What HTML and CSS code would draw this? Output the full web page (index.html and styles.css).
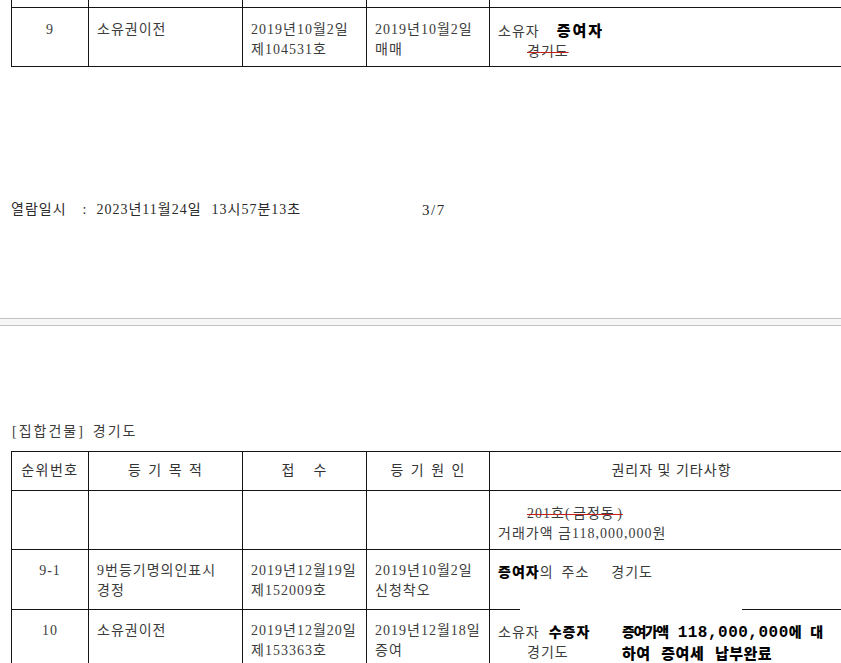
FILE: index.html
```html
<!DOCTYPE html>
<html lang="ko">
<head>
<meta charset="utf-8">
<title>등기사항</title>
<link rel="stylesheet" href="styles.css">
</head>
<body>
<div class="page">
  <div class="sheet">
    <div class="row stub">
      <div class="cell"></div><div class="cell"></div><div class="cell"></div><div class="cell"></div><div class="cell"></div>
    </div>
    <div class="row r9">
      <div class="cell num">9</div>
      <div class="cell">소유권이전</div>
      <div class="cell">2019년10월2일<br>제104531호</div>
      <div class="cell">2019년10월2일<br>매매</div>
      <div class="cell">소유자<span class="heavy big gap21">증여자</span><br><span class="strike ind">경기도</span></div>
    </div>
  </div>

  <div class="footer">
    <span class="foot-left"><span>열람일시</span><span class="colon">:</span><span class="fdate">2023년11월24일</span><span class="ftime">13시57분13초</span></span>
    <span class="pageno">3/7</span>
  </div>

  <div class="sep"></div>

  <div class="title"><span>[집합건물]</span><span class="tloc">경기도</span></div>

  <div class="sheet">
    <div class="row head">
      <div class="cell hc spaced">순위번호</div>
      <div class="cell hc wide">등 기 목 적</div>
      <div class="cell hc">접&nbsp;&nbsp;&nbsp;&nbsp;수</div>
      <div class="cell hc wide">등 기 원 인</div>
      <div class="cell hc">권리자 및 기타사항</div>
    </div>
    <div class="row ra">
      <div class="cell num"></div>
      <div class="cell"></div>
      <div class="cell"></div>
      <div class="cell"></div>
      <div class="cell"><span class="strike ind wide2">201호( 금정동 )</span><br>거래가액 금118,000,000원</div>
    </div>
    <div class="row r91">
      <div class="cell num">9-1</div>
      <div class="cell">9번등기명의인표시<br>경정</div>
      <div class="cell">2019년12월19일<br>제152009호</div>
      <div class="cell">2019년10월2일<br>신청착오</div>
      <div class="cell"><span class="heavy">증여자</span>의<span class="sp12">주소</span><span class="sp32">경기도</span></div>
    </div>
    <div class="row r10">
      <div class="cell num">10</div>
      <div class="cell">소유권이전</div>
      <div class="cell">2019년12월20일<br>제153363호</div>
      <div class="cell">2019년12월18일<br>증여</div>
      <div class="cell split">
        <div class="mask"></div>
        <div class="owner">소유자<span class="heavy gap8">수증자</span><br><span class="ind">경기도</span></div>
        <div class="note"><span class="kb kb1">증여가액</span><span class="mono"> 118,000,000</span><span class="kb kb1">에</span><span class="mono"> </span><span class="kb kb1">대</span><br><span class="kb">하여 증여세 납부완료</span></div>
      </div>
    </div>
  </div>
</div>
</body>
</html>
```

FILE: styles.css
```css
html, body {
  margin: 0;
  padding: 0;
  overflow: hidden;
  background: #ffffff;
}

.page {
  width: 841px;
  height: 663px;
  overflow: hidden;
  font-family: "Liberation Serif", "Noto Sans CJK KR", serif;
  font-size: 14px;
  line-height: 20px;
  letter-spacing: 1px;
  color: #3c3c3c;
}

.sheet {
  margin-left: 11px;
  width: 843px;
}

.row {
  display: grid;
  grid-template-columns: 78px 154px 124px 123px 364px;
}

.cell {
  box-sizing: border-box;
  border-right: 1px solid #141414;
  border-bottom: 1px solid #141414;
  padding: 0 8px;
  white-space: nowrap;
}

.cell:first-child {
  border-left: 1px solid #141414;
}

.stub .cell { height: 8px; }

.r9 .cell { height: 59px; padding-top: 12px; }

.num { text-align: center; }

.footer {
  margin-top: 133px;
  padding-left: 11px;
  display: grid;
  grid-template-columns: 411px auto;
  color: #2a2a2a;
}

.colon { margin-left: 16px; }
.fdate { margin-left: 9px; }
.ftime { margin-left: 10px; }
.pageno { letter-spacing: 1.5px; font-size: 15px; }

.sep {
  margin-top: 98px;
  box-sizing: border-box;
  height: 8px;
  border-top: 1px solid #c2c2c2;
  border-bottom: 1px solid #c2c2c2;
  background: #f6f6f6;
}

.title {
  margin-top: 96px;
  padding-left: 12px;
  letter-spacing: 2px;
}

.tloc { margin-left: 8px; }

.title + .sheet { margin-top: 9px; }

.head .cell {
  height: 40px;
  border-top: 1px solid #141414;
  display: flex;
  align-items: center;
  justify-content: center;
  padding: 0;
  color: #333333;
}

.spaced { letter-spacing: 1.5px; }
.wide { word-spacing: 2px; }
.wide2 { word-spacing: -2px; }

.ra .cell { height: 59px; padding-top: 13px; }
.r91 .cell { height: 60px; padding-top: 11px; }
.r10 .cell { height: 80px; padding-top: 11px; }

.heavy {
  font-family: "Noto Sans CJK KR", sans-serif;
  font-weight: 900;
  color: #000000;
  font-size: 14px;
  letter-spacing: 1px;
}

.big { font-size: 15px; letter-spacing: 2px; }
.gap21 { margin-left: 17px; }
.gap8 { margin-left: 9px; }

.ind { margin-left: 29px; }

.strike {
  text-decoration: line-through;
  text-decoration-color: #c81e1e;
  text-decoration-thickness: 1px;
}

.sp12 { margin-left: 8px; }
.sp32 { margin-left: 22px; }

.split {
  position: relative;
  display: flex;
  align-items: flex-start;
}

.mask {
  position: absolute;
  left: 30px;
  top: -2px;
  width: 222px;
  height: 3px;
  background: #ffffff;
}

.owner { width: 124px; }

.note {
  color: #000000;
  font-weight: 700;
  line-height: 20px;
}

.kb {
  font-family: "Noto Sans CJK KR", sans-serif;
  font-weight: 900;
  font-size: 15px;
  letter-spacing: 0.5px;
  word-spacing: 6px;
}

.kb1 {
  font-size: 14px;
  letter-spacing: -1.5px;
}

.mono {
  font-family: "Liberation Mono", monospace;
  font-weight: 700;
  font-size: 16px;
  letter-spacing: 0.5px;
}
```
